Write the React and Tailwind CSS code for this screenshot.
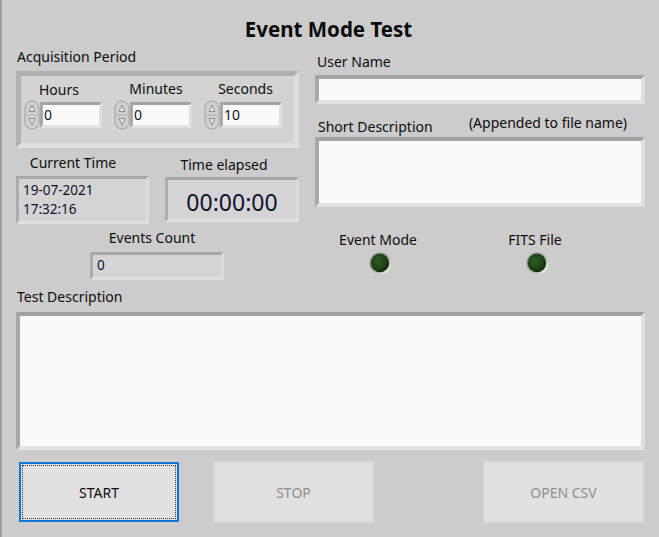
import React from "react";

const font = { fontFamily: '"Noto Sans", "Open Sans", sans-serif' };

const whiteBox =
  "border-4 border-t-[#a2a2a2] border-l-[#a8a8a8] border-r-[#dedede] border-b-[#e2e2e2] bg-[#fafafa]";
const grayBox =
  "border-[3px] border-t-[#a8a8a8] border-l-[#acacac] border-r-[#dcdcdc] border-b-[#e0e0e0] bg-[#d4d4d4]";

const Spinner = () => (
  <svg width="16" height="30" viewBox="0 0 16 30" className="shrink-0">
    <rect x="1" y="1" width="14" height="28" rx="7" fill="#cfcfcf" stroke="#a0a0a0" />
    <line x1="2" y1="15" x2="14" y2="15" stroke="#b0b0b0" />
    <path d="M5 11.5 L8 5 L11 11.5 Z" fill="#e4e4e4" stroke="#878787" strokeWidth="0.9" />
    <path d="M5 18.5 L8 25 L11 18.5 Z" fill="#e4e4e4" stroke="#878787" strokeWidth="0.9" />
  </svg>
);

const Led = ({ id }) => (
  <svg width="23" height="23" viewBox="0 0 22 22">
    <defs>
      <linearGradient id={`${id}-rim`} x1="0" y1="0" x2="1" y2="1">
        <stop offset="0" stopColor="#6e6e6e" />
        <stop offset="0.55" stopColor="#b4b4b4" />
        <stop offset="1" stopColor="#ffffff" />
      </linearGradient>
      <radialGradient id={`${id}-lens`} cx="0.4" cy="0.38" r="0.65">
        <stop offset="0" stopColor="#2f5c26" />
        <stop offset="0.6" stopColor="#1e4614" />
        <stop offset="1" stopColor="#102c09" />
      </radialGradient>
    </defs>
    <circle cx="11" cy="11" r="10.5" fill={`url(#${id}-rim)`} />
    <circle cx="10.5" cy="10.5" r="8.8" fill={`url(#${id}-lens)`} />
  </svg>
);

const TimeField = ({ label, value, labelCls }) => (
  <div className="flex flex-col w-[78px]">
    <div className={`text-center text-[14px] leading-[18px] ${labelCls}`}>{label}</div>
    <div className="flex items-center h-[30px] mt-[1px]">
      <Spinner />
      <div className={`${whiteBox} border-[3px] w-[62px] h-[26px] pl-[1px] text-[14px] leading-[19px] text-[#10102a]`}>
        {value}
      </div>
    </div>
  </div>
);

export default function App() {
  return (
    <div
      style={font}
      className="w-[659px] h-[537px] bg-[#cccccc] border-l-2 border-[#a0a0a0] pl-[14px] text-[#0d0d0d] overflow-hidden"
    >
      <div className="h-[42px] pt-[17px] pr-[18px] text-center text-[20.5px] font-bold leading-[24px] text-[#0a0a0a]">
        Event Mode Test
      </div>

      <div className="flex">
        {/* left column */}
        <div className="w-[283px] flex flex-col">
          <div className="mt-[6px] ml-[1px] text-[14px] leading-[18px]">Acquisition Period</div>
          <div className="mt-[5px] h-[77px] border-[5px] border-t-[#b0b0b0] border-l-[#b2b2b2] border-r-[#dedede] border-b-[#e0e0e0] bg-[#d3d3d3] flex gap-[12px] pl-[3px] pt-[5px]">
            <TimeField label="Hours" value="0" labelCls="pr-[8px]" />
            <TimeField label="Minutes" value="0" labelCls="pl-[6px] -mt-[1px] mb-[1px]" />
            <TimeField label="Seconds" value="10" labelCls="pl-[5px] -mt-[1px] mb-[1px]" />
          </div>

          <div className="flex gap-[16px]">
            <div className="w-[133px] flex flex-col">
              <div className="mt-[6px] pr-[19px] text-center text-[14px] leading-[18px]">Current Time</div>
              <div className={`${grayBox} mt-[4px] h-[48px] pl-[4px] pt-[2px] text-[13.5px] leading-[19px] text-[#10102a]`}>
                <div>19-07-2021</div>
                <div>17:32:16</div>
              </div>
            </div>
            <div className="w-[134px] flex flex-col">
              <div className="mt-[8px] pr-[16px] text-center text-[14px] leading-[18px]">Time elapsed</div>
              <div className={`${grayBox} mt-[3px] h-[45px] flex items-center justify-center pt-[5px] text-[23px] leading-[26px] text-[#10102a]`}>
                00:00:00
              </div>
            </div>
          </div>

          <div className="ml-[74px] w-[134px] flex flex-col">
            <div className="mt-[5px] pr-[10px] text-center text-[14px] leading-[18px]">Events Count</div>
            <div className={`${grayBox} mt-[5px] h-[28px] pl-[4px] text-[13.5px] leading-[21px] text-[#10102a]`}>0</div>
          </div>
        </div>

        {/* right column */}
        <div className="ml-[16px] w-[330px] flex flex-col">
          <div className="mt-[11px] pl-[2px] text-[14px] leading-[18px]">User Name</div>
          <div className={`${whiteBox} mt-[4px] h-[29px]`} />

          <div className="flex items-start mt-[10px] pl-[3px]">
            <div className="mt-[4px] text-[14px] leading-[18px]">Short Description</div>
            <div className="ml-auto mr-[18px] text-[14px] leading-[18px]">(Appended to file name)</div>
          </div>
          <div className={`${whiteBox} mt-[1px] h-[70px]`} />

          <div className="flex mt-[24px]">
            <div className="ml-[13px] w-[100px] flex flex-col items-center">
              <div className="text-[14px] leading-[18px]">Event Mode</div>
              <div className="mt-[3px] pl-[4px]">
                <Led id="led1" />
              </div>
            </div>
            <div className="ml-[57px] w-[100px] flex flex-col items-center">
              <div className="text-[14px] leading-[18px]">FITS File</div>
              <div className="mt-[3px] pl-[4px]">
                <Led id="led2" />
              </div>
            </div>
          </div>
        </div>
      </div>

      <div className="mt-[8px] ml-[1px] text-[14px] leading-[18px]">Test Description</div>
      <div className={`${whiteBox} mt-[6px] w-[629px] h-[138px]`} />

      <div className="flex items-center h-[62px] mt-[11px]">
        <button className="ml-[3px] w-[160px] h-[60px] border-2 border-[#0a78d4] bg-[#e1e1e1] p-[1px]">
          <div className="w-full h-full border border-dotted border-[#333] flex items-center justify-center text-[14px] text-[#0d0d0d]">
            START
          </div>
        </button>
        <button className="ml-[34px] w-[161px] h-[62px] border-2 border-[#d8d8d8] bg-[#e1e1e1] text-[14px] text-[#8f8f8f]">
          STOP
        </button>
        <button className="ml-[109px] w-[161px] h-[62px] border-2 border-[#d8d8d8] bg-[#e1e1e1] text-[14px] text-[#8f8f8f]">
          OPEN CSV
        </button>
      </div>
    </div>
  );
}
